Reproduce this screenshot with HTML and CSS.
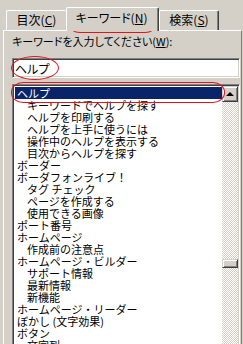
FILE: index.html
```html
<!DOCTYPE html>
<html lang="ja">
<head>
    <meta charset="UTF-8">
    <title>ヘルプ キーワード</title>
    <link rel="stylesheet" href="styles.css">
</head>
<body>
    <div class="dialog">
        <div class="tabs">
            <div class="tab tab-contents">目次(<u>C</u>)</div>
            <div class="tab tab-active">キーワード(<u>N</u>)</div>
            <div class="tab tab-search">検索(<u>S</u>)</div>
        </div>
        <div class="panel">
            <div class="prompt">キーワードを入力してください(<u>W</u>):</div>
            <div class="field">ヘルプ</div>
            <div class="listbox">
                <ul class="keyword-list">
                    <li class="sel">ヘルプ</li>
                    <li class="sub">キーワードでヘルプを探す</li>
                    <li class="sub">ヘルプを印刷する</li>
                    <li class="sub">ヘルプを上手に使うには</li>
                    <li class="sub">操作中のヘルプを表示する</li>
                    <li class="sub">目次からヘルプを探す</li>
                    <li>ボーダー</li>
                    <li>ボーダフォンライブ！</li>
                    <li class="sub">タグ チェック</li>
                    <li class="sub">ページを作成する</li>
                    <li class="sub">使用できる画像</li>
                    <li>ポート番号</li>
                    <li>ホームページ</li>
                    <li class="sub">作成前の注意点</li>
                    <li>ホームページ・ビルダー</li>
                    <li class="sub">サポート情報</li>
                    <li class="sub">最新情報</li>
                    <li class="sub">新機能</li>
                    <li>ホームページ・リーダー</li>
                    <li>ぼかし (文字効果)</li>
                    <li>ボタン</li>
                    <li class="sub">文字列</li>
                </ul>
                <div class="scrollbar">
                    <div class="arrow-up"><span></span></div>
                    <div class="track"><div class="thumb"></div></div>
                </div>
            </div>
        </div>
        <!-- 赤い丸の注釈 -->
        <span class="mark mark-tab"></span>
        <span class="mark mark-field"></span>
        <span class="mark mark-item"></span>
    </div>
</body>
</html>
```

FILE: styles.css
```css
*{
    padding:0;margin:0;
    box-sizing:border-box;
}
body{
    background:#d4d0c8;
    font-family:"Noto Sans CJK JP","Noto Sans",sans-serif;
    font-feature-settings:"palt";
    color:#000;
}
u{text-decoration:underline;text-underline-offset:1px;}
.dialog{
    position:relative;
    width:243px;
    height:344px;
    padding:0 1px 0 3px;
    overflow:hidden;
}
.tabs{
    display:flex;
    align-items:flex-end;
    height:30px;
    padding-left:3px;
}
.tab{
    height:20px;
    font-size:12px;
    line-height:18px;
    text-align:center;
    background:#d4d0c8;
    border-top:1px solid #fff;
    border-left:1px solid #fff;
    border-right:1px solid #404040;
    border-radius:2px 2px 0 0;
    box-shadow:inset -1px 0 #808080;
}
.tab-contents{width:60px;border-right:none;box-shadow:none;}
.tab-active{
    position:relative;
    z-index:1;
    width:93px;
    height:24px;
    margin-bottom:-1px;
    line-height:20px;
    padding-right:2px;
}
.tab-search{width:60px;}
.panel{
    height:314px;
    padding:4px 1px 0 8px;
    border-top:1px solid #fff;
    border-left:1px solid #fff;
    border-right:1px solid #808080;
}
.prompt{
    font-size:11px;
    line-height:13px;
    height:13px;
}
.field,.listbox{
    width:228px;
    background:#fff;
    border:1px solid;
    border-color:#808080 #fff #fff #808080;
    box-shadow:inset 1px 1px #404040,inset -1px -1px #d4d0c8;
}
.field{
    height:20px;
    margin-top:10px;
    padding:1px 0 0 2px;
    font-size:12px;
    line-height:17px;
}
.listbox{
    display:flex;
    height:270px;
    margin-top:6px;
    padding:1px;
}
.keyword-list{
    flex:1;
    list-style:none;
    padding:1px 0 0 1px;
    font-size:11px;
    line-height:12px;
    font-feature-settings:normal;
}
.keyword-list li{
    height:12px;
    padding-left:2px;
    white-space:nowrap;
}
.keyword-list li.sub{padding-left:12px;}
.keyword-list li.sel{
    background:#0a246a;
    color:#fff;
}
.scrollbar{
    width:16px;
    display:flex;
    flex-direction:column;
}
.arrow-up{
    height:16px;
    display:flex;
    align-items:center;
    justify-content:center;
    background:#d4d0c8;
    border:1px solid;
    border-color:#d4d0c8 #404040 #404040 #d4d0c8;
    box-shadow:inset 1px 1px #fff,inset -1px -1px #808080;
}
.arrow-up span{
    width:0;height:0;
    border-left:4px solid transparent;
    border-right:4px solid transparent;
    border-bottom:4px solid #000;
}
.track{
    flex:1;
    background:repeating-conic-gradient(#d4d0c8 0 25%,#fff 0 50%) 0 0/2px 2px;
}
.thumb{
    height:9px;
    margin-top:157px;
    background:#d4d0c8;
    border:1px solid;
    border-color:#d4d0c8 #404040 #404040 #d4d0c8;
    box-shadow:inset 1px 1px #fff,inset -1px -1px #808080;
}
.mark{
    position:absolute;
    border:1px solid #e3141e;
}
.mark-tab{left:67px;top:7px;width:91px;height:26px;border-radius:13px/12px;}
.mark-field{left:11px;top:56px;width:48px;height:24px;border-radius:50%;}
.mark-item{left:11px;top:82px;width:214px;height:21px;border-radius:12px/10px;}
```
